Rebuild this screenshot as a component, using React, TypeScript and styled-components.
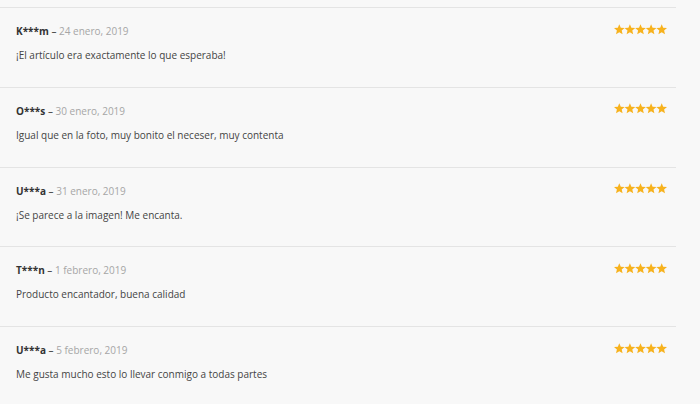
import styled, { createGlobalStyle } from "styled-components";

const GlobalStyle = createGlobalStyle`
  html, body {
    margin: 0;
    padding: 0;
    background: #f8f8f8;
  }
  body {
    font-family: "Open Sans", "Noto Sans", sans-serif;
  }
`;

const List = styled.ul`
  list-style: none;
  margin: 7px 0 0;
  padding: 0;
  width: 676px;
`;

const Review = styled.li`
  border-top: 1px solid #e4e4e4;
  padding: 15px 9px 0 16px;
  box-sizing: border-box;
  height: 79.75px;
`;

const Header = styled.div`
  display: flex;
  align-items: center;
  justify-content: space-between;
  height: 16px;
`;

const Meta = styled.p`
  margin: 0;
  font-size: 10px;
  line-height: 16px;
  color: #a6a6a6;
`;

const Author = styled.strong`
  color: #333;
  font-weight: 700;
`;

const Dash = styled.span`
  color: #333;
`;

const Body = styled.p`
  margin: 8px 0 0;
  font-size: 10px;
  line-height: 16px;
  color: #444;
`;

const StarRow = styled.svg`
  display: block;
  margin-top: -4px;
`;

const starPoints = (cx: number, cy: number, r: number) => {
  const pts: string[] = [];
  for (let i = 0; i < 10; i++) {
    const rad = i % 2 === 0 ? r : r * 0.45;
    const a = (Math.PI / 5) * i - Math.PI / 2;
    pts.push(`${(cx + rad * Math.cos(a)).toFixed(2)},${(cy + rad * Math.sin(a)).toFixed(2)}`);
  }
  return pts.join(" ");
};

const Stars = ({ count }: { count: number }) => (
  <StarRow width="53" height="11" viewBox="0 0 53 11" aria-label={`${count} de 5 estrellas`}>
    {Array.from({ length: 5 }).map((_, i) => (
      <polygon
        key={i}
        points={starPoints(5.3 + i * 10.6, 5.8, 5.6)}
        fill={i < count ? "#f7b21d" : "#ddd"}
      />
    ))}
  </StarRow>
);

const reviews = [
  { author: "K***m", date: "24 enero, 2019", text: "¡El artículo era exactamente lo que esperaba!" },
  { author: "O***s", date: "30 enero, 2019", text: "Igual que en la foto, muy bonito el neceser, muy contenta" },
  { author: "U***a", date: "31 enero, 2019", text: "¡Se parece a la imagen! Me encanta." },
  { author: "T***n", date: "1 febrero, 2019", text: "Producto encantador, buena calidad" },
  { author: "U***a", date: "5 febrero, 2019", text: "Me gusta mucho esto lo llevar conmigo a todas partes" },
];

const App = () => (
  <>
    <GlobalStyle />
    <List>
      {reviews.map((r, i) => (
        <Review key={i}>
          <Header>
            <Meta>
              <Author>{r.author}</Author> <Dash>–</Dash> {r.date}
            </Meta>
            <Stars count={5} />
          </Header>
          <Body>{r.text}</Body>
        </Review>
      ))}
    </List>
  </>
);

export default App;
